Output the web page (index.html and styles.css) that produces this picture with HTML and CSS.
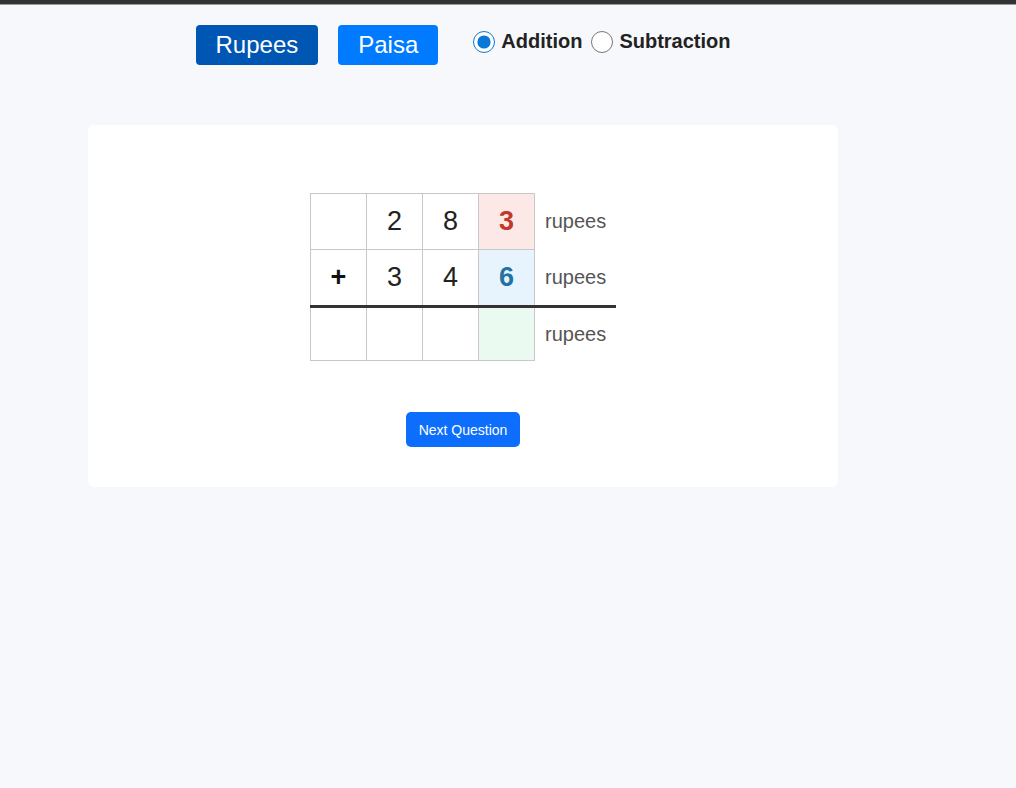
FILE: index.html
```html
<!DOCTYPE html>
<html>
<head>
<meta charset="utf-8">
<link rel="stylesheet" href="styles.css">
</head>
<body>
<div class="topbar"></div>
<div class="wrap">
  <div class="controls">
    <button class="unit active">Rupees</button>
    <button class="unit">Paisa</button>
    <div class="ops">
      <label class="op"><input type="radio" name="op" checked> Addition</label>
      <label class="op"><input type="radio" name="op"> Subtraction</label>
    </div>
  </div>
  <div class="card">
    <table class="sum">
      <tr class="r1">
        <td class="cell"></td>
        <td class="cell">2</td>
        <td class="cell">8</td>
        <td class="cell hl-red">3</td>
        <td class="lbl">rupees</td>
      </tr>
      <tr class="r2">
        <td class="cell sign">+</td>
        <td class="cell">3</td>
        <td class="cell">4</td>
        <td class="cell hl-blue">6</td>
        <td class="lbl">rupees</td>
      </tr>
      <tr class="r3">
        <td class="cell"></td>
        <td class="cell"></td>
        <td class="cell"></td>
        <td class="cell hl-green"></td>
        <td class="lbl">rupees</td>
      </tr>
    </table>
    <div class="actions">
      <button class="next">Next Question</button>
    </div>
  </div>
</div>
</body>
</html>
```

FILE: styles.css
```css
html, body {
  margin: 0;
  padding: 0;
  background: #f7f8fc;
  font-family: "Liberation Sans", Arial, sans-serif;
}
.topbar {
  height: 4px;
  background: #333;
  border-bottom: 1px solid #9a9a9a;
}
.wrap {
  width: 750px;
  margin-left: 88px;
}
.controls {
  display: flex;
  justify-content: center;
  align-items: flex-start;
  gap: 20px;
  padding-top: 20px;
}
.unit {
  height: 40px;
  padding: 0 20px;
  border: none;
  border-radius: 4px;
  background: #007bff;
  color: #fff;
  font-family: "Liberation Sans", Arial, sans-serif;
  font-size: 24px;
  cursor: pointer;
}
.unit.active {
  background: #0056b3;
}
.ops {
  display: flex;
  gap: 9px;
  margin-left: 15px;
  margin-top: 5px;
}
.op {
  display: flex;
  align-items: center;
  gap: 6px;
  font-size: 20px;
  font-weight: bold;
  color: #222;
  height: 23px;
}
.op input {
  width: 22px;
  height: 22px;
  margin: 0;
  accent-color: #0a78d7;
}
.card {
  margin-top: 60px;
  background: #fff;
  border-radius: 6px;
  padding: 68px 0 40px;
}
.sum {
  border-collapse: collapse;
  margin: 0 auto;
}
.cell {
  width: 55px;
  height: 55px;
  padding: 0;
  border: 1px solid #c8c8c8;
  text-align: center;
  vertical-align: middle;
  font-size: 27px;
  color: #222;
}
.r3 .cell {
  height: 52px;
}
.r2 td {
  border-bottom: 3px solid #333;
}
.lbl {
  width: 71px;
  padding: 0 0 0 10px;
  border: none;
  font-size: 20px;
  color: #555;
  vertical-align: middle;
}
.r2 .lbl {
  border-bottom: 3px solid #333;
}
.sign {
  font-weight: bold;
  color: #111;
}
.hl-red {
  background: #fde8e8;
  color: #c0392b;
  font-weight: bold;
}
.hl-blue {
  background: #e8f4fd;
  color: #2471a3;
  font-weight: bold;
}
.hl-green {
  background: #eafaf1;
}
.actions {
  display: flex;
  justify-content: center;
  margin-top: 51px;
}
.next {
  height: 35px;
  padding: 0 13px;
  border: none;
  border-radius: 5px;
  background: #0d6efd;
  color: #fff;
  font-family: "Liberation Sans", Arial, sans-serif;
  font-size: 14px;
  cursor: pointer;
}
```
